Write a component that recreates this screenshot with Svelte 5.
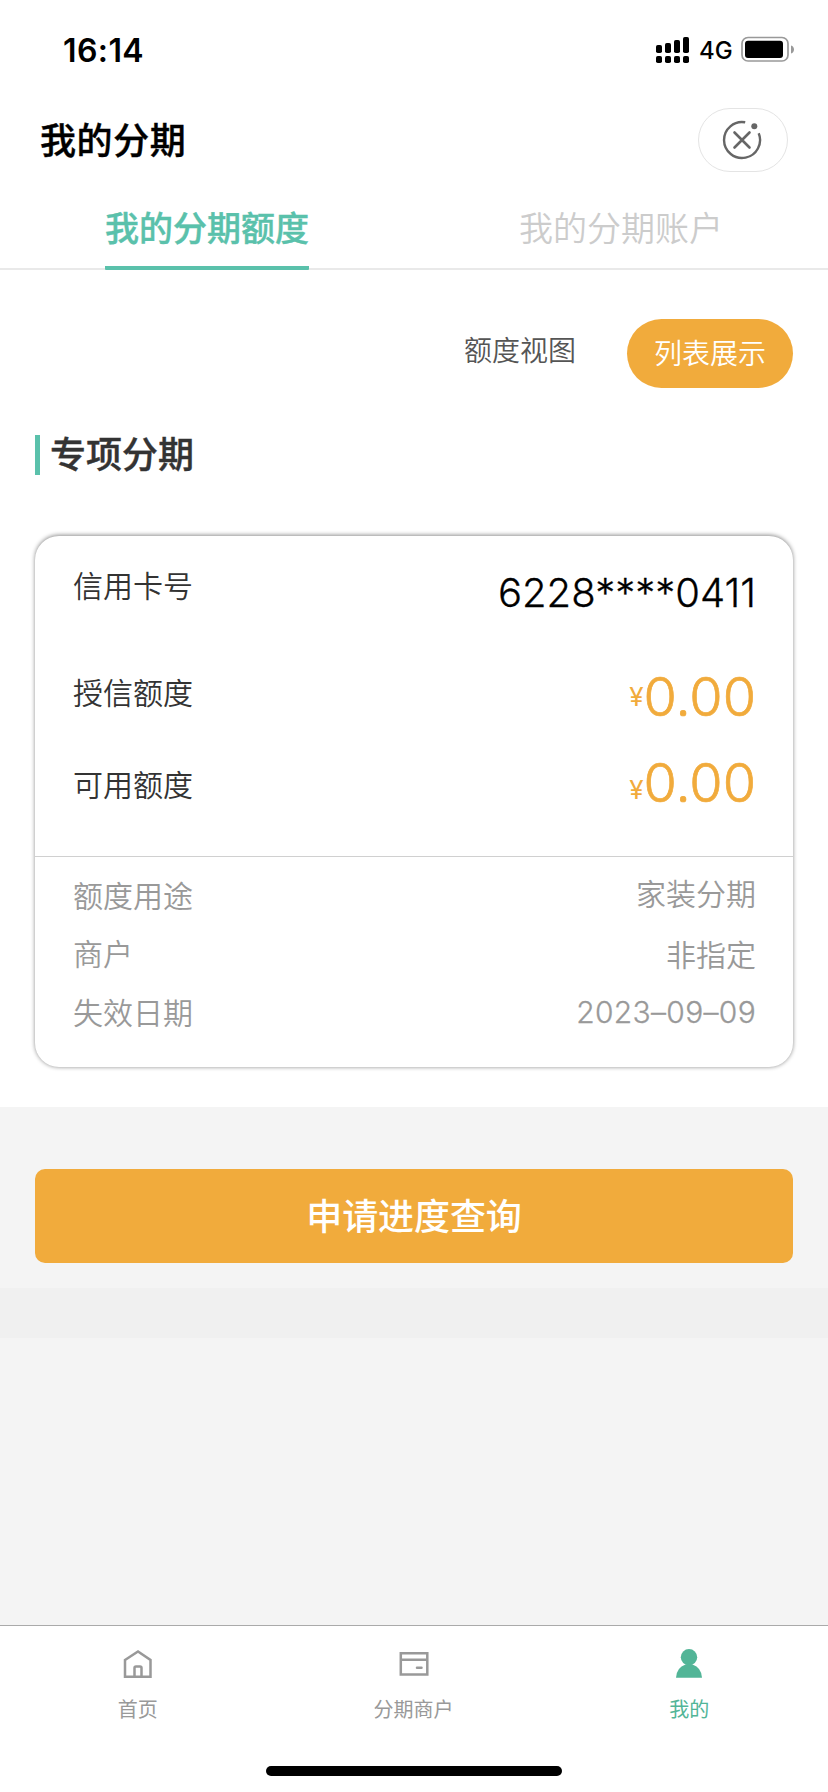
<script>
  const tabs = [
    { label: '我的分期额度', active: true },
    { label: '我的分期账户', active: false }
  ];

  const details = [
    { label: '额度用途', value: '家装分期', kind: 'usage' },
    { label: '商户', value: '非指定', kind: 'merchant' },
    { label: '失效日期', value: '2023–09–09', kind: 'date' }
  ];
</script>

<div class="screen">
  <div class="status">
    <span class="time">16:14</span>
    <div class="indicators">
      <svg class="signal" width="34" height="28" viewBox="0 0 34 28">
        <rect x="0" y="9" width="6" height="8" rx="1.8" />
        <rect x="9" y="7" width="6" height="10" rx="1.8" />
        <rect x="18" y="4" width="6" height="13" rx="1.8" />
        <rect x="27" y="1" width="6" height="16" rx="1.8" />
        <rect x="0" y="20" width="6" height="7" rx="1.8" />
        <rect x="9" y="20" width="6" height="7" rx="1.8" />
        <rect x="18" y="20" width="6" height="7" rx="1.8" />
        <rect x="27" y="20" width="6" height="7" rx="1.8" />
      </svg>
      <span class="network">4G</span>
      <svg class="battery" width="54" height="26" viewBox="0 0 54 26">
        <rect x="1" y="1.500" width="46" height="23.5" rx="6" fill="none" stroke="#999" stroke-width="1.7" />
        <rect x="4" y="4.700" width="38" height="17.300" rx="3" />
        <path d="M50 9.500c4 1 4 7 0 8z" fill="#999" />
      </svg>
    </div>
  </div>

  <header>
    <h1>我的分期</h1>
    <button class="capsule" aria-label="关闭">
      <svg width="42" height="42" viewBox="0 0 42 42" fill="none" stroke="#666" stroke-width="2.4">
        <path d="M24.200 3.300A18 18 0 1 0 37.700 14.200" />
        <path d="M13.500 13.500l15 15M28.500 13.500l-15 15" stroke-linecap="round" stroke-width="2.600" />
        <circle cx="33.300" cy="7.300" r="3" fill="#666" stroke="none" />
      </svg>
    </button>
  </header>

  <nav class="tabs">
    {#each tabs as tab}
      <div class="tab"><span class:active={tab.active}>{tab.label}</span></div>
    {/each}
  </nav>

  <main>
    <div class="views">
      <span class="view">额度视图</span>
      <span class="view selected">列表展示</span>
    </div>

    <h2>专项分期</h2>

    <section class="card">
      <div class="summary">
        <div class="line number">
          <span>信用卡号</span>
          <span class="card-no">6228****0411</span>
        </div>
        <div class="line credit">
          <span>授信额度</span>
          <span class="amount"><i>¥</i><b>0.00</b></span>
        </div>
        <div class="line available">
          <span>可用额度</span>
          <span class="amount"><i>¥</i><b>0.00</b></span>
        </div>
      </div>
      <div class="details">
        {#each details as row}
          <div class="row {row.kind}">
            <span>{row.label}</span>
            <span class="value">{row.value}</span>
          </div>
        {/each}
      </div>
    </section>
  </main>

  <div class="action"><button class="query">申请进度查询</button></div>
  <div class="band"></div>

  <footer>
    <div class="items">
      <div class="item">
        <svg width="30" height="32" viewBox="0 0 30 32" fill="none" stroke="#999" stroke-width="2.500">
          <path d="M2 12L15 3.400l12.500 8.600V28.800H2z" />
          <path d="M11.500 28.500V20q0-1.500 1.500-1.500h4q1.500 0 1.500 1.500v8.500" />
        </svg>
        <span>首页</span>
      </div>
      <div class="item">
        <svg width="30" height="32" viewBox="0 0 30 32" fill="none" stroke="#999" stroke-width="2.500">
          <path d="M1.800 5.200h26.500v21.200H1.800zM1.800 11.800h26.500" />
          <path d="M18 19.800h4.500" stroke-linecap="round" />
        </svg>
        <span>分期商户</span>
      </div>
      <div class="item current">
        <svg width="30" height="32" viewBox="0 0 30 32" fill="#52b597">
          <circle cx="15" cy="9.200" r="8.200" />
          <path d="M2 29.800q.500-10.300 9.500-13.300h7q9 3 9.500 13.300z" />
        </svg>
        <span>我的</span>
      </div>
    </div>
    <div class="home-bar"></div>
  </footer>
</div>

<style>
  :global(body) {
    margin: 0;
    background: #f4f4f4;
  }
  .screen {
    display: flex;
    flex-direction: column;
    width: 828px;
    height: 1792px;
    box-sizing: border-box;
    overflow: hidden;
    background: #f4f4f4;
    color: #333;
    font-family: Inter, 'Noto Sans CJK SC', sans-serif;
    font-size: 30px;
    white-space: nowrap;
  }
  button {
    border: 0;
    padding: 0;
    font-family: inherit;
  }
  .status {
    display: flex;
    justify-content: space-between;
    height: 100px;
    padding: 0 33px 0 63px;
    background: #fff;
    color: #000;
  }
  .time {
    padding-top: 31px;
    line-height: 40px;
    font-size: 32px;
    font-weight: 600;
    letter-spacing: 0.4px;
  }
  .indicators {
    display: flex;
    padding-top: 36px;
  }
  .network {
    width: 32px;
    margin: 0 10px 0 9px;
    line-height: 29px;
    font-size: 24px;
    font-weight: 500;
  }
  .battery {
    display: block;
  }
  header {
    display: flex;
    justify-content: space-between;
    height: 90px;
    padding: 8px 40px 0 40px;
    box-sizing: border-box;
    background: #fff;
  }
  h1 {
    margin: 0;
    line-height: 67px;
    color: #000;
    font-size: 36px;
    font-weight: 500;
    letter-spacing: 0.6px;
    -webkit-text-stroke: 0.4px #000;
  }
  .capsule {
    display: flex;
    align-items: center;
    justify-content: center;
    width: 90px;
    height: 64px;
    padding-right: 2px;
    box-sizing: border-box;
    border: 1px solid #e4e4e4;
    border-radius: 32px;
    background: #fff;
  }
  .tabs {
    display: flex;
    height: 80px;
    box-sizing: border-box;
    border-bottom: 2px solid #e9e9e9;
    background: #fff;
  }
  .tab {
    flex: 1;
    text-align: center;
  }
  .tab span {
    display: inline-block;
    height: 80px;
    box-sizing: border-box;
    line-height: 78px;
    color: #ccc;
    font-size: 34px;
    font-weight: 350;
  }
  .tab .active {
    border-bottom: 4px solid #5ac1ab;
    border-radius: 1px;
    color: #5ac1ab;
    font-weight: 500;
    -webkit-text-stroke: 0.4px #5ac1ab;
  }
  main {
    height: 837px;
    padding: 49px 35px 0;
    box-sizing: border-box;
    background: #fff;
  }
  .views {
    display: flex;
    justify-content: flex-end;
    gap: 24px;
    height: 69px;
    font-size: 28px;
  }
  .view {
    padding: 0 27px;
    line-height: 64px;
    color: #555;
    font-weight: 350;
  }
  .selected {
    border-radius: 35px;
    background: #f1ab3c;
    color: #fff;
    line-height: 71px;
    height: 69px;
  }
  h2 {
    height: 40px;
    margin: 47px 0 61px;
    padding-left: 10px;
    border-left: 5px solid #5ac1ab;
    line-height: 41px;
    font-size: 36px;
    font-weight: 500;
    -webkit-text-stroke: 0.4px #333;
  }
  .card {
    height: 531px;
    border-radius: 24px;
    background: #fff;
    box-shadow: 0 -0.5px 4px rgba(0, 0, 0, 0.45);
  }
  .summary {
    height: 321px;
    padding: 0 37px 0 38px;
    box-sizing: border-box;
    border-bottom: 1px solid #d0d0d0;
    font-weight: 350;
  }
  .line {
    display: flex;
    justify-content: space-between;
  }
  .number {
    height: 112px;
    line-height: 101px;
  }
  .card-no {
    line-height: 113px;
    color: #000;
    font-size: 40px;
    font-weight: 300;
    -webkit-text-stroke: 0.3px #000;
  }
  .credit {
    height: 92px;
    line-height: 91px;
  }
  .available {
    height: 92px;
    line-height: 91px;
  }
  .amount {
    display: flex;
    color: #f1ab3c;
  }
  .amount b {
    font-size: 54px;
    font-weight: 300;
    line-height: 97px;
    -webkit-text-stroke: 0.7px #f1ab3c;
  }
  .amount i {
    font-size: 26px;
    font-style: normal;
    font-weight: 400;
    line-height: 97px;
  }
  .available b {
    line-height: 85px;
  }
  .available i {
    line-height: 100px;
  }
  .details {
    padding: 9px 37px 0 38px;
    color: #999;
    font-weight: 350;
  }
  .row {
    display: flex;
    justify-content: space-between;
    height: 59px;
    line-height: 60px;
  }
  .merchant,
  .date {
    line-height: 58px;
  }
  .usage .value {
    line-height: 57px;
  }
  .merchant .value {
    line-height: 60px;
  }
  .date .value {
    line-height: 57px;
    font-weight: 300;
    letter-spacing: 0.3px;
    -webkit-text-stroke: 0.3px #999;
  }
  .action {
    height: 181px;
    padding: 62px 35px 0;
    box-sizing: border-box;
  }
  .query {
    display: block;
    width: 100%;
    height: 94px;
    border-radius: 10px;
    background: #f1ab3c;
    color: #fff;
    line-height: 96px;
    font-size: 36px;
    font-weight: 500;
    letter-spacing: -0.1px;
  }
  .band {
    height: 50px;
    background: #f0f0f0;
  }
  footer {
    height: 167px;
    margin-top: auto;
    box-sizing: border-box;
    border-top: 1px solid #aaa;
    background: #fff;
  }
  .items {
    display: flex;
    height: 140px;
    padding-right: 1px;
  }
  .item {
    flex: 1;
    display: flex;
    flex-direction: column;
    align-items: center;
    padding-top: 22px;
    color: #999;
    font-size: 20px;
  }
  .item span {
    margin-top: 15px;
    line-height: 30px;
  }
  .current {
    color: #52b597;
  }
  .home-bar {
    width: 296px;
    height: 10px;
    margin: 0 auto;
    border-radius: 5px;
    background: #000;
  }
</style>
